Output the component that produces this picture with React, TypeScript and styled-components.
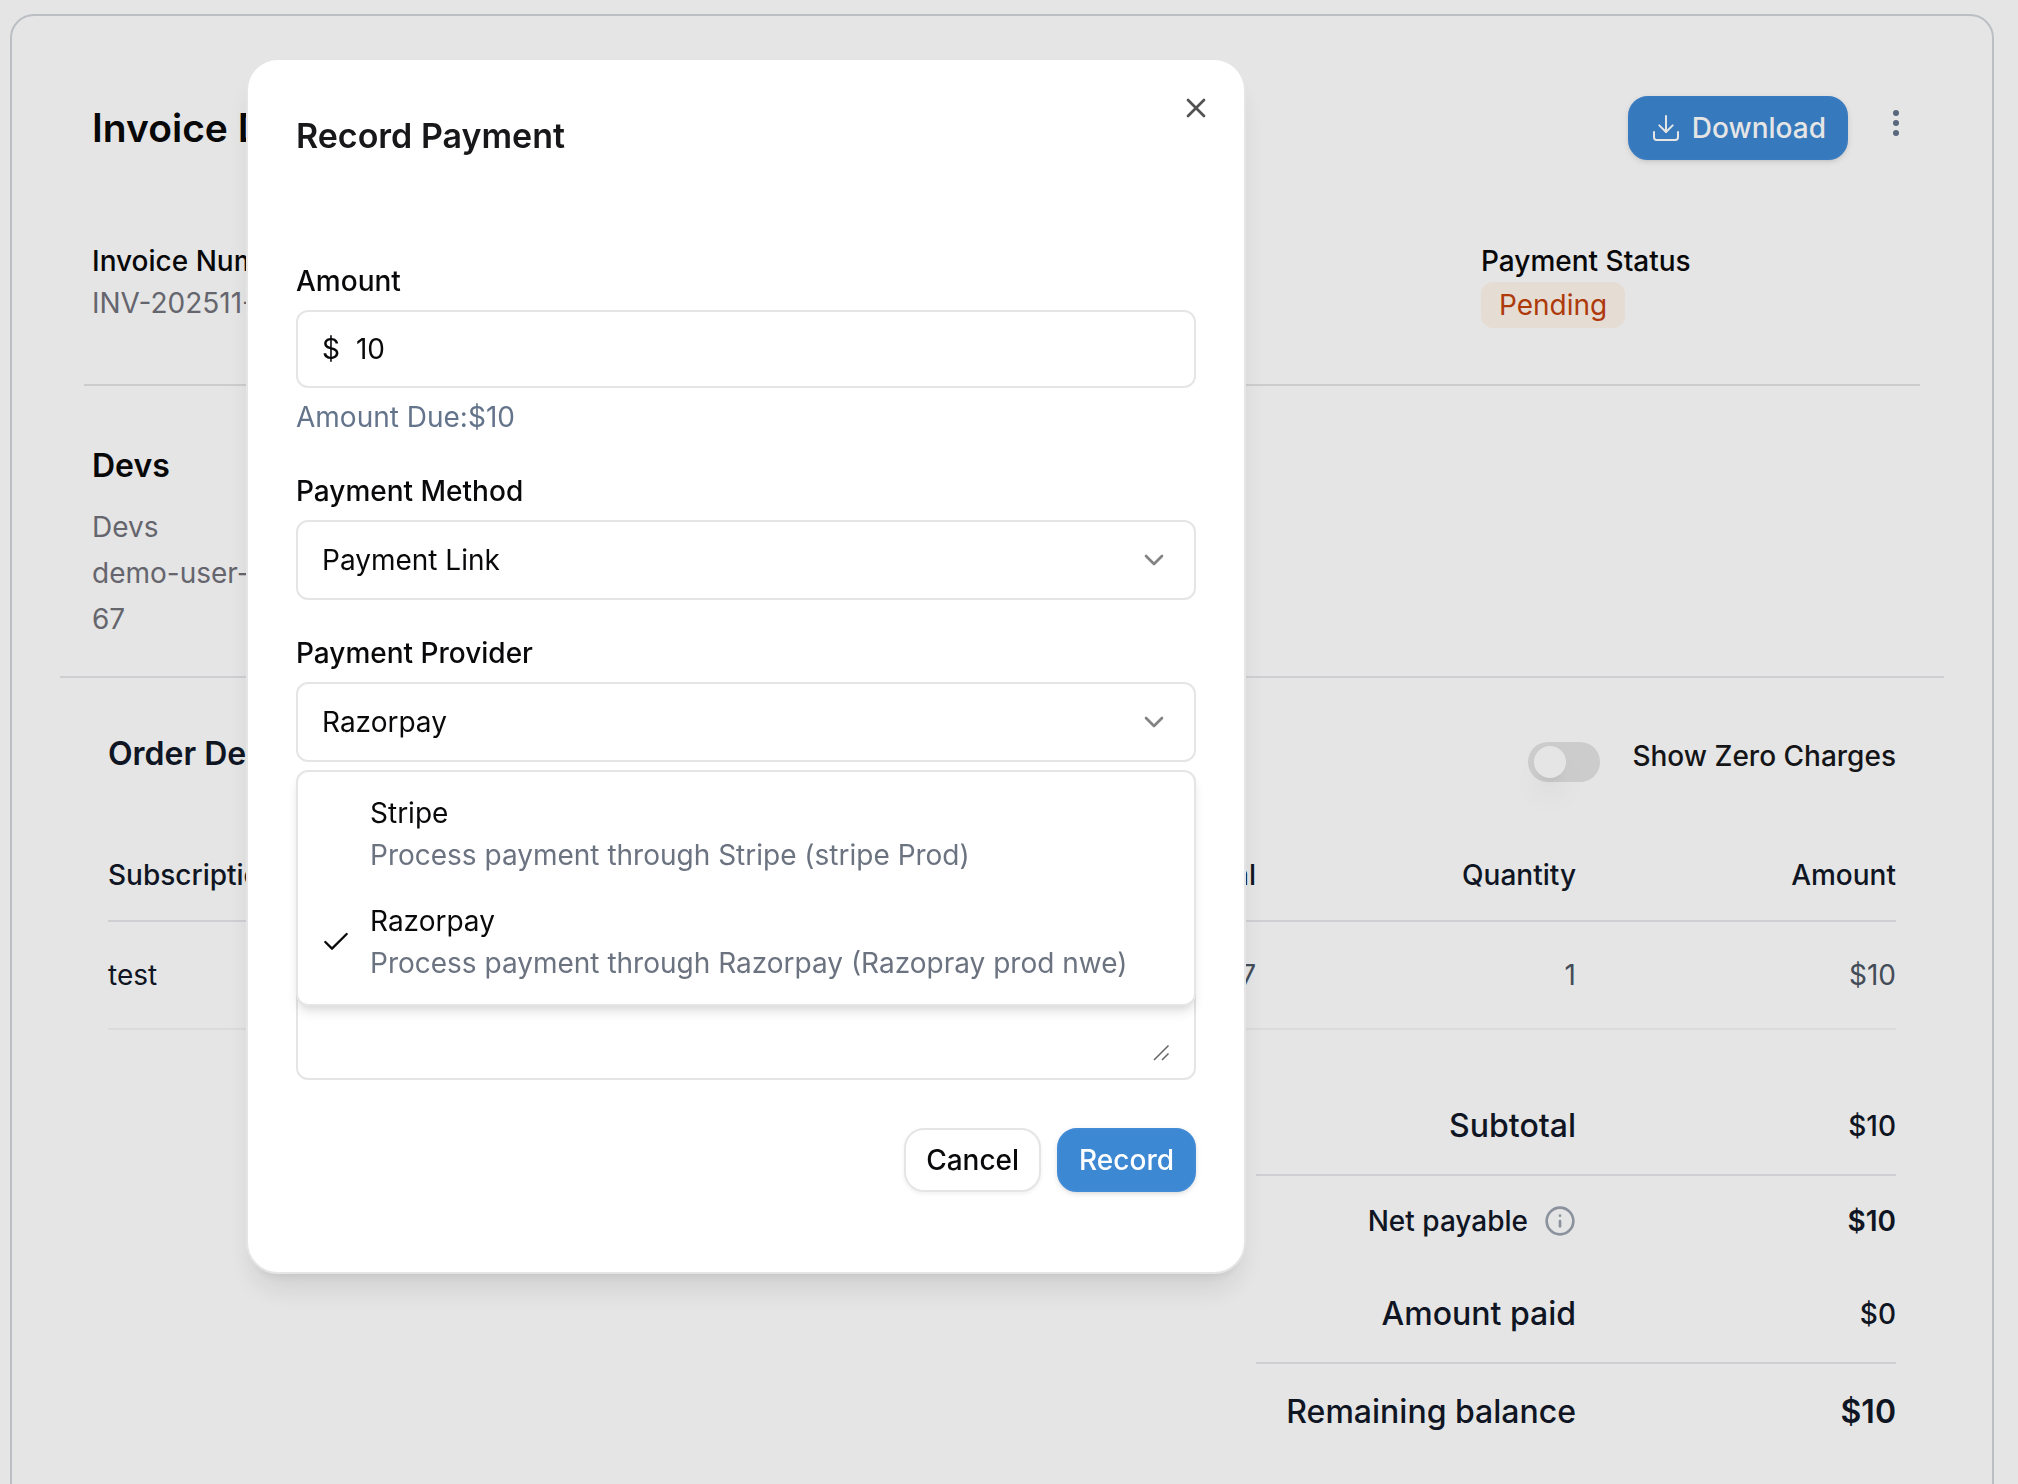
import React, { useState } from "react";
import styled, { createGlobalStyle, css } from "styled-components";
import { Check, ChevronDown, Download, Info, X } from "lucide-react";

const GlobalStyle = createGlobalStyle`
  *, *::before, *::after { box-sizing: border-box; }
  body {
    margin: 0;
    background: #ffffff;
    color: #09090b;
    font-family: Inter, "Liberation Sans", sans-serif;
    font-size: 28px;
    line-height: 42px;
    -webkit-font-smoothing: antialiased;
  }
  button, input, select, textarea { font: inherit; color: inherit; }
  h1, h2, h3, p, ul, dl, dd, dt { margin: 0; padding: 0; }
`;

const Page = styled.div`
  height: 100vh;
  overflow: hidden;
  padding: 14px 24px 0 10px;
`;

const InvoiceCard = styled.main`
  min-height: 100vh;
  padding: 80px 48px;
  border: 2px solid #d1d5db;
  border-radius: 24px;
`;

const Header = styled.header`
  display: flex;
  justify-content: space-between;
  align-items: flex-start;
  padding: 0 32px;
`;

const PageTitle = styled.h1`
  font-size: 39px;
  line-height: 64px;
  font-weight: 600;
`;

const HeaderActions = styled.div`
  display: flex;
  align-items: flex-start;
  gap: 32px;
`;

const Button = styled.button<{ $primary?: boolean }>`
  display: inline-flex;
  align-items: center;
  gap: 10px;
  height: 64px;
  padding: 0 20px;
  border: 2px solid #e5e5e5;
  border-radius: 20px;
  background: #ffffff;
  font-weight: 500;
  box-shadow: 0 2px 4px rgba(0, 0, 0, 0.06);
  cursor: pointer;
  ${(p) =>
    p.$primary &&
    css`
      border-color: #408ad6;
      background: #3d88d3;
      color: #ffffff;
      box-shadow: 0 2px 6px rgba(0, 0, 0, 0.1), 0 2px 4px -2px rgba(0, 0, 0, 0.1);
    `}
`;

const MenuButton = styled.button`
  display: grid;
  place-items: center;
  width: 32px;
  height: 54px;
  padding: 0;
  border: 0;
  background: none;
  color: #64748b;
  cursor: pointer;
`;

const MetaGrid = styled.section`
  display: grid;
  grid-template-columns: repeat(4, 1fr);
  column-gap: 32px;
  margin: 80px 24px 0;
  padding: 0 8px 56px;
`;

const MetaItem = styled.div<{ $column: number }>`
  grid-column: ${(p) => p.$column};
  display: flex;
  flex-direction: column;
  align-items: flex-start;
`;

const MetaLabel = styled.h2`
  font-size: 28px;
  line-height: 42px;
  font-weight: 500;
`;

const Muted = styled.p`
  color: #71717a;
`;

const StatusBadge = styled.span`
  padding: 2px 18px;
  border-radius: 12px;
  background: #fff7ed;
  color: #c2410c;
`;

const Rule = styled.hr`
  height: 2px;
  margin: 0 24px;
  border: 0;
  background: #e4e4e4;
`;

const Customer = styled.section`
  padding: 56px 32px 34px;
`;

const SectionTitle = styled.h2`
  font-size: 32px;
  line-height: 48px;
  font-weight: 600;
`;

const Address = styled.div`
  margin-top: 14px;
  line-height: 46px;
`;

const Orders = styled.section`
  padding: 52px 48px 0;
  border-top: 2px solid #e5e7eb;
  color: #111827;
`;

const OrdersHeader = styled.div`
  display: flex;
  justify-content: space-between;
  align-items: flex-start;
  margin-bottom: 48px;
`;

const ToggleGroup = styled.div`
  display: flex;
  align-items: flex-end;
  gap: 32px;
`;

const ToggleLabel = styled.label`
  line-height: 52px;
  font-weight: 500;
  color: #18181b;
`;

const Toggle = styled.input`
  appearance: none;
  display: flex;
  align-items: center;
  width: 72px;
  height: 40px;
  margin: 0;
  padding: 0 6px;
  border-radius: 20px;
  background: #e4e4e5;
  cursor: pointer;
  &::before {
    content: "";
    width: 32px;
    height: 32px;
    border-radius: 50%;
    background: #ffffff;
    box-shadow: 0 20px 30px -6px rgba(0, 0, 0, 0.1), 0 8px 12px -8px rgba(0, 0, 0, 0.1);
  }
  &:checked {
    justify-content: flex-end;
    background: #3d88d3;
  }
`;

const OrderTable = styled.table`
  width: 100%;
  border-collapse: separate;
  border-spacing: 0;
`;

const HeadCell = styled.th<{ $numeric?: boolean; $wide?: boolean }>`
  width: ${(p) => (p.$wide ? "320px" : "auto")};
  padding: 24px 0;
  border-bottom: 2px solid #e5e7eb;
  font-weight: 500;
  text-align: ${(p) => (p.$numeric ? "right" : "left")};
`;

const Cell = styled.td<{ $numeric?: boolean }>`
  padding: 32px 0;
  border-bottom: 2px solid #f3f4f6;
  color: ${(p) => (p.$numeric ? "#4b5563" : "#111827")};
  text-align: ${(p) => (p.$numeric ? "right" : "left")};
`;

const Totals = styled.dl`
  width: 640px;
  margin: 48px 0 0 auto;
`;

const TotalRow = styled.div<{ $divided?: boolean }>`
  display: grid;
  grid-template-columns: 1fr 1fr;
  align-items: center;
  padding: 24px 0;
  font-weight: 500;
  text-align: right;
  border-bottom: ${(p) => (p.$divided ? "2px solid #e5e7eb" : "0")};
`;

const largeText = css`
  font-size: 32px;
  line-height: 48px;
`;

const TotalLabel = styled.dt<{ $large?: boolean }>`
  display: flex;
  justify-content: flex-end;
  align-items: center;
  gap: 16px;
  ${(p) => p.$large && largeText}
`;

const TotalValue = styled.dd<{ $large?: boolean; $strong?: boolean }>`
  font-weight: ${(p) => (p.$strong ? 600 : 500)};
  ${(p) => p.$large && largeText}
`;

const InfoIcon = styled(Info)`
  color: #9ca3af;
`;

const Backdrop = styled.div`
  position: fixed;
  inset: 0;
  padding: 58px 0 0 246px;
  background: rgba(0, 0, 0, 0.102);
`;

const Dialog = styled.form`
  position: relative;
  max-width: 1000px;
  padding: 48px 48px 80px;
  border: 2px solid #e5e5e5;
  border-radius: 32px;
  background: #ffffff;
  box-shadow: 0 20px 30px -6px rgba(0, 0, 0, 0.1), 0 8px 12px -8px rgba(0, 0, 0, 0.1);
`;

const DialogTitle = styled.h2`
  margin-bottom: 96px;
  font-size: 34px;
  line-height: 56px;
  font-weight: 600;
  color: #18181b;
`;

const CloseButton = styled.button`
  position: absolute;
  top: 32px;
  right: 32px;
  display: flex;
  padding: 0;
  border: 0;
  background: none;
  opacity: 0.7;
  cursor: pointer;
`;

const Fields = styled.div`
  display: grid;
  gap: 32px;
`;

const Field = styled.div`
  position: relative;
  display: grid;
  gap: 8px;
`;

const FieldLabel = styled.label`
  font-weight: 500;
`;

const InputBox = styled.div`
  display: flex;
  align-items: center;
  gap: 16px;
  height: 78px;
  padding: 0 24px;
  border: 2px solid #e5e5e5;
  border-radius: 12px;
`;

const AmountInput = styled.input`
  flex: 1;
  min-width: 0;
  padding: 0;
  border: 0;
  outline: 0;
  background: none;
`;

const Hint = styled.p`
  color: #64748b;
`;

const SelectBox = styled.div`
  display: grid;
  align-items: center;
  height: 80px;
  > * { grid-area: 1 / 1; }
`;

const Select = styled.select`
  appearance: none;
  width: 100%;
  height: 100%;
  padding: 0 72px 0 24px;
  border: 2px solid #e5e5e5;
  border-radius: 12px;
  outline: 0;
  background: #ffffff;
`;

const Chevron = styled(ChevronDown)`
  justify-self: end;
  margin-right: 26px;
  opacity: 0.5;
  pointer-events: none;
`;

const Options = styled.ul`
  position: absolute;
  z-index: 1;
  top: calc(100% + 8px);
  left: 0;
  right: 0;
  padding: 8px;
  list-style: none;
  border: 2px solid #e5e5e5;
  border-radius: 12px;
  background: #ffffff;
  box-shadow: 0 8px 12px -2px rgba(0, 0, 0, 0.1), 0 4px 8px -4px rgba(0, 0, 0, 0.1);
`;

const Option = styled.li`
  display: grid;
  grid-template-columns: 32px 1fr;
  align-items: center;
  column-gap: 18px;
  padding: 12px 14px;
  cursor: pointer;
`;

const OptionText = styled.div`
  grid-column: 2;
`;

const OptionHint = styled.p`
  color: #6b7280;
`;

const NotesBox = styled.div`
  position: relative;
  display: flex;
  height: 286px;
  padding: 16px 24px;
  border: 2px solid #e5e5e5;
  border-radius: 12px;
`;

const NotesInput = styled.textarea`
  flex: 1;
  padding: 0;
  border: 0;
  outline: 0;
  resize: none;
  background: none;
`;

const Grip = styled.svg`
  position: absolute;
  right: 24px;
  bottom: 16px;
  pointer-events: none;
`;

const Actions = styled.footer`
  display: flex;
  justify-content: flex-end;
  gap: 16px;
  margin-top: 48px;
`;

const PROVIDERS = [
  { name: "Stripe", hint: "Process payment through Stripe (stripe Prod)" },
  { name: "Razorpay", hint: "Process payment through Razorpay (Razopray prod nwe)" },
];

const TOTALS = [
  { label: "Subtotal", value: "$10", large: true, divided: true },
  { label: "Net payable", value: "$10", strong: true, info: true },
  { label: "Amount paid", value: "$0", large: true, divided: true },
  { label: "Remaining balance", value: "$10", large: true, strong: true, largeValue: true },
];

function Invoice() {
  return (
    <InvoiceCard>
      <Header>
        <PageTitle>Invoice Details</PageTitle>
        <HeaderActions>
          <Button type="button" $primary>
            <Download size={32} strokeWidth={1.5} />
            Download
          </Button>
          <MenuButton type="button" aria-label="More actions">
            <svg width="8" height="28" viewBox="0 0 8 28" fill="currentColor">
              <circle cx="4" cy="4" r="3" />
              <circle cx="4" cy="14" r="3" />
              <circle cx="4" cy="24" r="3" />
            </svg>
          </MenuButton>
        </HeaderActions>
      </Header>
      <MetaGrid>
        <MetaItem $column={1}>
          <MetaLabel>Invoice Number</MetaLabel>
          <Muted>INV-202511-</Muted>
        </MetaItem>
        <MetaItem $column={4}>
          <MetaLabel>Payment Status</MetaLabel>
          <StatusBadge>Pending</StatusBadge>
        </MetaItem>
      </MetaGrid>
      <Rule />
      <Customer>
        <SectionTitle>Devs</SectionTitle>
        <Address>
          <Muted>Devs</Muted>
          <Muted>demo-user-</Muted>
          <Muted>67</Muted>
        </Address>
      </Customer>
      <Orders>
        <OrdersHeader>
          <SectionTitle>Order Details</SectionTitle>
          <ToggleGroup>
            <Toggle id="zero-charges" type="checkbox" role="switch" />
            <ToggleLabel htmlFor="zero-charges">Show Zero Charges</ToggleLabel>
          </ToggleGroup>
        </OrdersHeader>
        <OrderTable>
          <thead>
            <tr>
              <HeadCell>Subscription</HeadCell>
              <HeadCell $numeric>Interval</HeadCell>
              <HeadCell $numeric $wide>Quantity</HeadCell>
              <HeadCell $numeric $wide>Amount</HeadCell>
            </tr>
          </thead>
          <tbody>
            <tr>
              <Cell>test</Cell>
              <Cell $numeric>Nov 27 - Dec 27</Cell>
              <Cell $numeric>1</Cell>
              <Cell $numeric>$10</Cell>
            </tr>
          </tbody>
        </OrderTable>
        <Totals>
          {TOTALS.map((t) => (
            <TotalRow key={t.label} $divided={t.divided}>
              <TotalLabel $large={t.large}>
                {t.label}
                {t.info && <InfoIcon size={32} />}
              </TotalLabel>
              <TotalValue $large={t.largeValue} $strong={t.strong}>
                {t.value}
              </TotalValue>
            </TotalRow>
          ))}
        </Totals>
      </Orders>
    </InvoiceCard>
  );
}

function RecordPayment() {
  const [amount, setAmount] = useState("10");
  const [provider, setProvider] = useState("Razorpay");
  return (
    <Backdrop>
      <Dialog role="dialog" aria-labelledby="dialog-title" onSubmit={(e) => e.preventDefault()}>
        <DialogTitle id="dialog-title">Record Payment</DialogTitle>
        <CloseButton type="button" aria-label="Close">
          <X size={32} />
        </CloseButton>
        <Fields>
          <Field>
            <FieldLabel htmlFor="amount">Amount</FieldLabel>
            <InputBox>
              <span>$</span>
              <AmountInput id="amount" value={amount} onChange={(e) => setAmount(e.target.value)} />
            </InputBox>
            <Hint>Amount Due:$10</Hint>
          </Field>
          <Field>
            <FieldLabel htmlFor="method">Payment Method</FieldLabel>
            <SelectBox>
              <Select id="method">
                <option>Payment Link</option>
              </Select>
              <Chevron size={32} />
            </SelectBox>
          </Field>
          <Field>
            <FieldLabel htmlFor="provider">Payment Provider</FieldLabel>
            <SelectBox>
              <Select id="provider" value={provider} onChange={(e) => setProvider(e.target.value)}>
                {PROVIDERS.map((p) => (
                  <option key={p.name}>{p.name}</option>
                ))}
              </Select>
              <Chevron size={32} />
            </SelectBox>
            <Options role="listbox" aria-label="Payment Provider">
              {PROVIDERS.map((p) => (
                <Option
                  key={p.name}
                  role="option"
                  aria-selected={p.name === provider}
                  onClick={() => setProvider(p.name)}
                >
                  {p.name === provider && <Check size={32} strokeWidth={1.75} />}
                  <OptionText>
                    <p>{p.name}</p>
                    <OptionHint>{p.hint}</OptionHint>
                  </OptionText>
                </Option>
              ))}
            </Options>
          </Field>
          <NotesBox>
            <NotesInput aria-label="Notes" />
            <Grip width="18" height="18" viewBox="0 0 18 18" stroke="#666666" strokeWidth="1.5">
              <path d="M2 16 16.500 1.500M10 16l6.500-6.500" />
            </Grip>
          </NotesBox>
        </Fields>
        <Actions>
          <Button type="button">Cancel</Button>
          <Button type="submit" $primary>
            Record
          </Button>
        </Actions>
      </Dialog>
    </Backdrop>
  );
}

export default function App() {
  return (
    <>
      <GlobalStyle />
      <Page>
        <Invoice />
      </Page>
      <RecordPayment />
    </>
  );
}
